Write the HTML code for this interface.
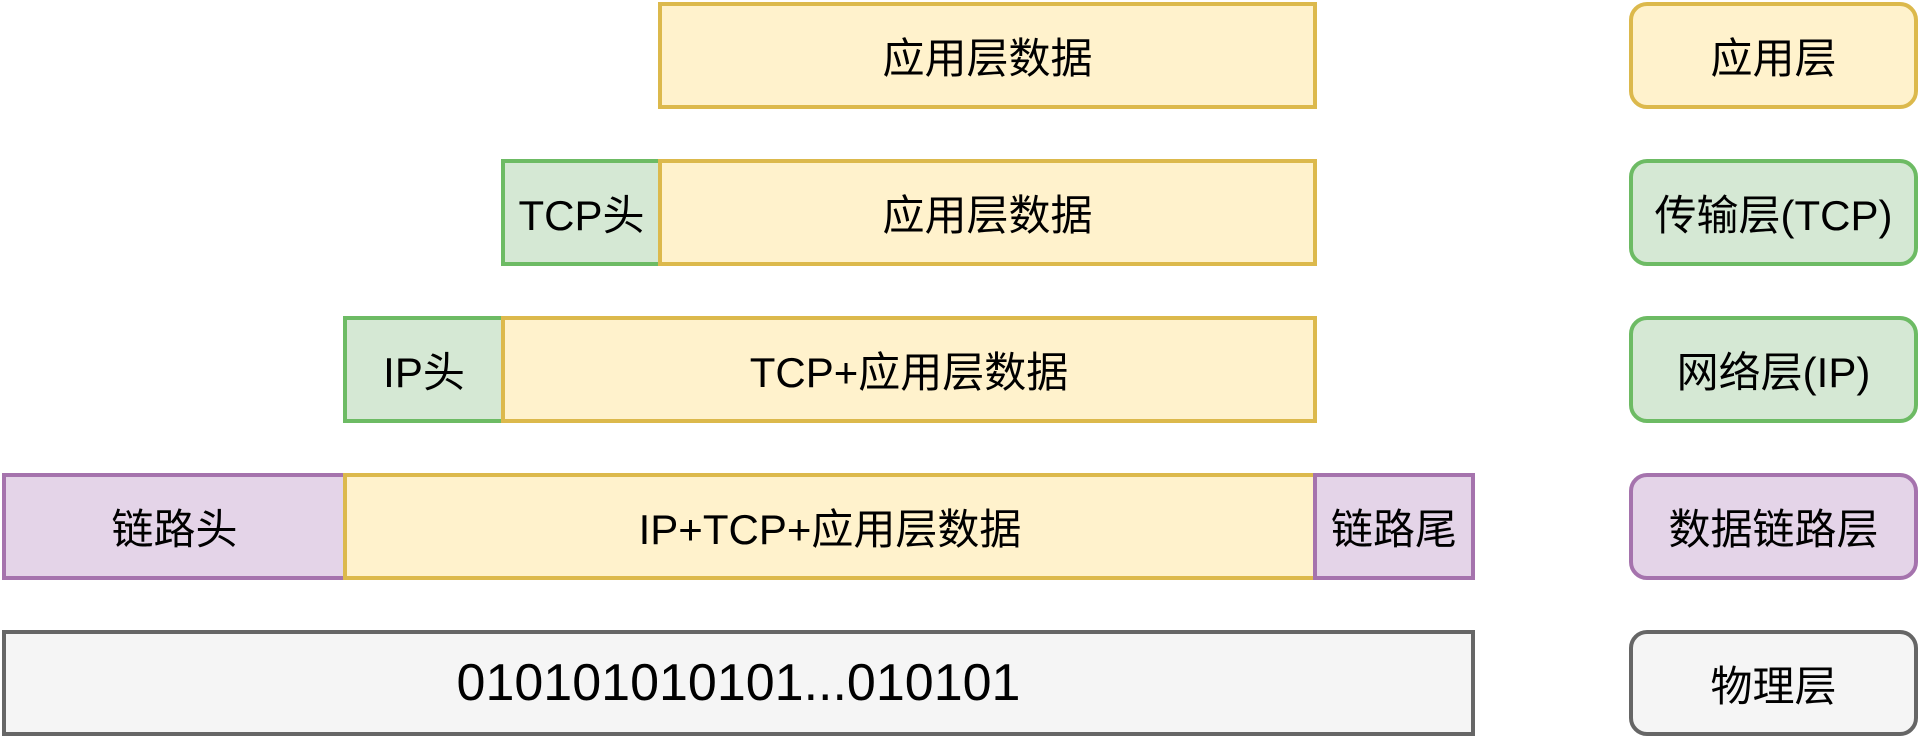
<!DOCTYPE html>
<html><head><meta charset="utf-8"><style>
body{margin:0;width:1920px;height:737px;background:#fff;position:relative;overflow:hidden;font-family:"Liberation Sans","Noto Sans CJK SC",sans-serif;color:#000}
.b{position:absolute;box-sizing:border-box;border:4px solid;display:flex;align-items:center;justify-content:center;font-size:42px;white-space:nowrap}
.y{background:#fff2cc;border-color:#dcb94c}
.g{background:#d5e8d4;border-color:#6dbb64}
.p{background:#e4d4e8;border-color:#a573ad}
.k{background:#f5f5f5;border-color:#666}
.r{border-radius:18px;left:1629px;width:289px}
</style></head><body>
<div class="b y" style="left:658px;top:2px;width:659px;height:107px">应用层数据</div>
<div class="b g" style="left:501px;top:159px;width:161px;height:107px">TCP头</div>
<div class="b y" style="left:658px;top:159px;width:659px;height:107px">应用层数据</div>
<div class="b g" style="left:343px;top:316px;width:162px;height:107px">IP头</div>
<div class="b y" style="left:501px;top:316px;width:816px;height:107px">TCP+应用层数据</div>
<div class="b p" style="left:2px;top:473px;width:345px;height:107px">链路头</div>
<div class="b y" style="left:343px;top:473px;width:974px;height:107px">IP+TCP+应用层数据</div>
<div class="b p" style="left:1313px;top:473px;width:162px;height:107px">链路尾</div>
<div class="b k" style="left:2px;top:630px;width:1473px;height:106px;font-size:52px">010101010101...010101</div>
<div class="b y r" style="top:2px;height:107px">应用层</div>
<div class="b g r" style="top:159px;height:107px">传输层(TCP)</div>
<div class="b g r" style="top:316px;height:107px">网络层(IP)</div>
<div class="b p r" style="top:473px;height:107px">数据链路层</div>
<div class="b k r" style="top:630px;height:106px">物理层</div>
</body></html>
